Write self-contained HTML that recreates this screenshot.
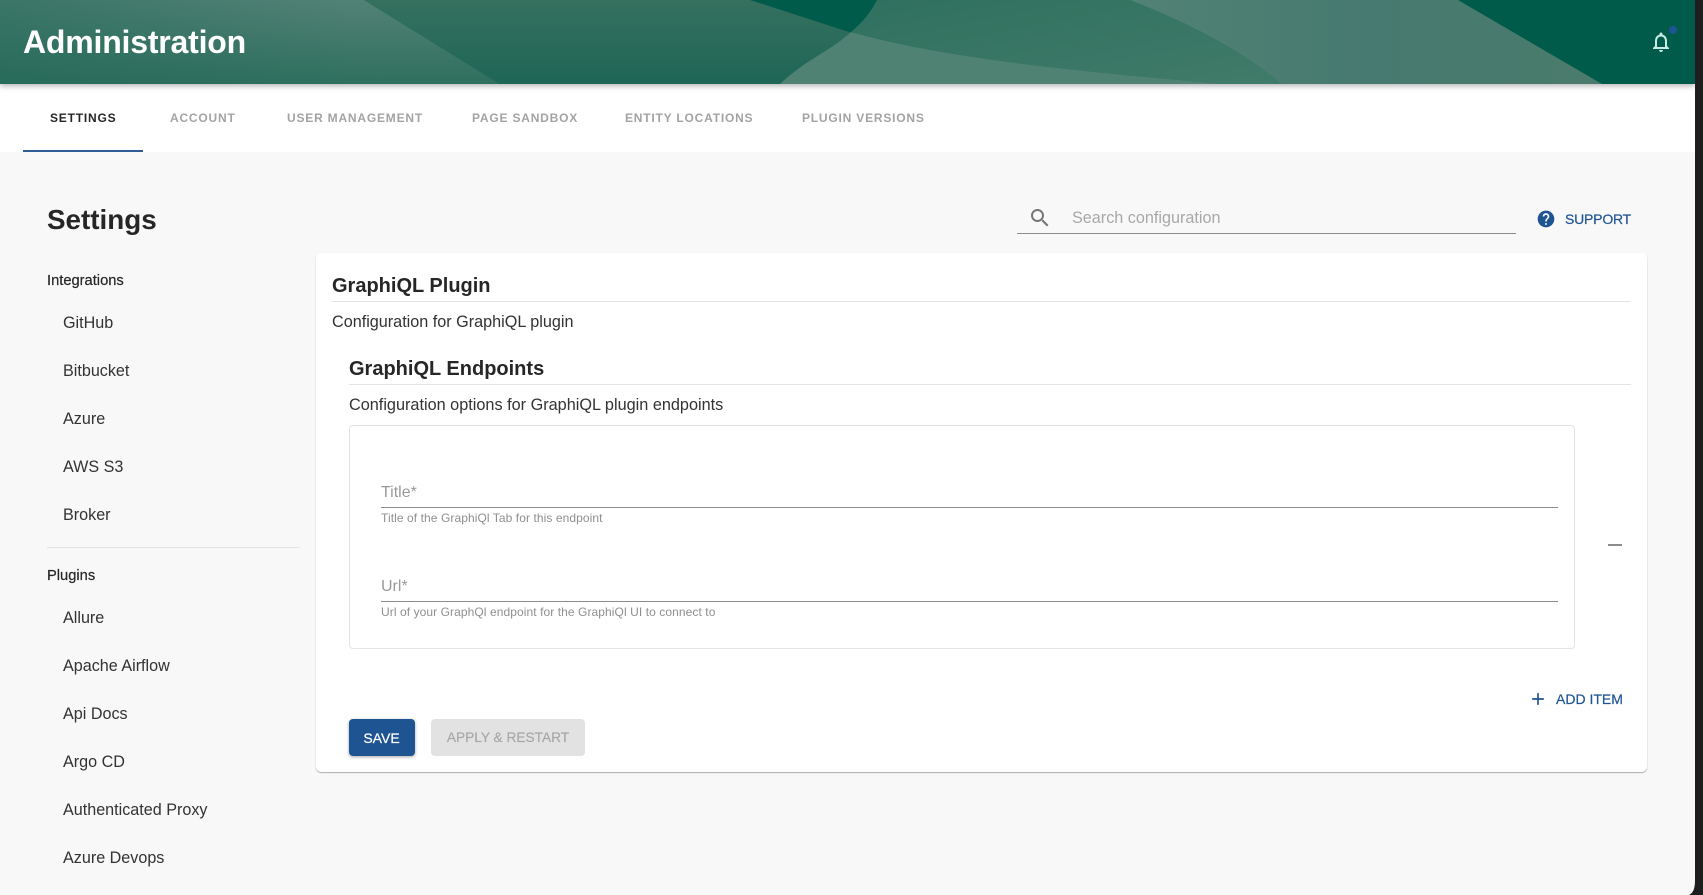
<!DOCTYPE html>
<html lang="en"><head><meta charset="utf-8"><title>Administration</title>
<style>
html,body{margin:0;padding:0;width:1703px;height:895px;overflow:hidden;background:#f8f8f8;font-family:"Liberation Sans",Arial,sans-serif;color:#262626}
.t{position:absolute;white-space:nowrap;line-height:20px;height:20px}
.tab{font-size:12px;font-weight:bold;letter-spacing:.8px;color:#a3a3a3;top:108px}
.nav{font-size:16.15px;left:63px;color:#333}
.grp{font-size:14.7px;left:47px;color:#262626;-webkit-text-stroke:.2px #262626}
.b{position:absolute;background:#8c8c8c;height:1px}
.d{position:absolute;background:#e3e3e3;height:1px}
.help{font-size:12px;color:#8f8f8f;left:381px;letter-spacing:.08px}
svg{position:absolute;display:block}
.blue{color:#1f5493;-webkit-text-stroke:.2px #1f5493;font-size:14px}
</style></head>
<body>
<div style="position:absolute;left:0;top:0;width:1695px;height:152px;background:#fff"></div>
<svg style="left:0;top:0;filter:drop-shadow(0 2px 3px rgba(0,0,0,.3))" width="1695" height="84" viewBox="0 0 1695 84">
<defs>
<linearGradient id="l" x1="0" y1="0" x2="0" y2="1"><stop offset="0" stop-color="#528276"/><stop offset="1" stop-color="#2f6f5e"/></linearGradient>
<linearGradient id="lx" x1="0" y1="0" x2="1" y2="0"><stop offset="0" stop-color="#1e6656" stop-opacity=".45"/><stop offset=".7" stop-color="#1e6656" stop-opacity="0"/></linearGradient>
<linearGradient id="m" x1="0" y1="0" x2="0" y2="1"><stop offset="0" stop-color="#36705f"/><stop offset="1" stop-color="#1e6656"/></linearGradient>
<linearGradient id="m2" x1="0" y1="0" x2="1" y2="1"><stop offset="0" stop-color="#30705f"/><stop offset="1" stop-color="#417b69"/></linearGradient>
<linearGradient id="r" x1="0" y1="0" x2="1" y2="0"><stop offset="0" stop-color="#518274"/><stop offset=".5" stop-color="#477a70"/><stop offset="1" stop-color="#4a7b6b"/></linearGradient>
</defs>
<rect width="1695" height="84" fill="#005b4b"/>
<path d="M0 0H364L500 84H0Z" fill="url(#l)"/>
<path d="M0 0H364L500 84H0Z" fill="url(#lx)"/>
<path d="M364 0H750L852 33C832 50 805 60 780 84H500Z" fill="url(#m)"/>
<path d="M877 0H1130C1180 20 1235 45 1281 84H1225C1090 72 950 60 851 32C862 23 871 12 877 0Z" fill="url(#m2)"/>
<path d="M851 32C950 60 1090 72 1225 84H780C805 60 832 50 851 32Z" fill="#4f8272"/>
<path d="M1130 0H1458L1602 84H1281C1235 45 1180 20 1130 0Z" fill="url(#r)"/>
</svg>
<div class="t" style="left:23px;top:22px;height:40px;line-height:40px;font-size:32px;font-weight:bold;color:#fff;letter-spacing:-.2px">Administration</div>
<svg style="left:1649px;top:30px" width="24" height="24" viewBox="0 0 24 24"><path fill="#c8ebe3" d="M12 22c1.1 0 2-.9 2-2h-4c0 1.1.9 2 2 2zm6-6v-5c0-3.07-1.63-5.64-4.5-6.32V4c0-.83-.67-1.5-1.5-1.5s-1.5.67-1.5 1.5v.68C7.64 5.36 6 7.92 6 11v5l-2 2v1h16v-1l-2-2zm-2 1H8v-6c0-2.48 1.51-4.5 4-4.5s4 2.02 4 4.5v6z"/></svg>
<div style="position:absolute;left:1669px;top:26px;width:8px;height:8px;border-radius:50%;background:#1f5493"></div>

<div class="t tab" style="left:50px;color:#262626">SETTINGS</div>
<div class="t tab" style="left:170px">ACCOUNT</div>
<div class="t tab" style="left:287px">USER MANAGEMENT</div>
<div class="t tab" style="left:472px">PAGE SANDBOX</div>
<div class="t tab" style="left:625px">ENTITY LOCATIONS</div>
<div class="t tab" style="left:802px">PLUGIN VERSIONS</div>
<div style="position:absolute;left:23px;top:150px;width:120px;height:2px;background:#2f5d96"></div>

<div class="t" style="left:47px;top:204px;height:32px;line-height:32px;font-size:27.8px;font-weight:bold">Settings</div>
<div class="t grp" style="top:271px">Integrations</div>
<div class="t nav" style="top:313px">GitHub</div>
<div class="t nav" style="top:361px">Bitbucket</div>
<div class="t nav" style="top:409px">Azure</div>
<div class="t nav" style="top:457px">AWS S3</div>
<div class="t nav" style="top:505px">Broker</div>
<div class="d" style="left:47px;top:547px;width:253px"></div>
<div class="t grp" style="top:566px">Plugins</div>
<div class="t nav" style="top:608px">Allure</div>
<div class="t nav" style="top:656px">Apache Airflow</div>
<div class="t nav" style="top:704px">Api Docs</div>
<div class="t nav" style="top:752px">Argo CD</div>
<div class="t nav" style="top:800px">Authenticated Proxy</div>
<div class="t nav" style="top:848px">Azure Devops</div>

<svg style="left:1028px;top:206px" width="24" height="24" viewBox="0 0 24 24"><path fill="#757575" d="M15.5 14h-.79l-.28-.27C15.41 12.59 16 11.11 16 9.5 16 5.91 13.09 3 9.5 3S3 5.91 3 9.5 5.91 16 9.5 16c1.61 0 3.09-.59 4.23-1.57l.27.28v.79l5 4.99L20.49 19l-4.99-5zm-6 0C7.01 14 5 11.99 5 9.5S7.01 5 9.5 5 14 7.01 14 9.5 11.99 14 9.5 14z"/></svg>
<div class="t" style="left:1072px;top:208px;font-size:16.2px;color:#a8a8a8">Search configuration</div>
<div class="b" style="left:1017px;top:233px;width:499px"></div>
<svg style="left:1536px;top:209px" width="20" height="20" viewBox="0 0 24 24"><path fill="#1f5493" d="M12 2C6.48 2 2 6.48 2 12s4.48 10 10 10 10-4.48 10-10S17.52 2 12 2zm1 17h-2v-2h2v2zm2.07-7.75l-.9.92C13.45 12.9 13 13.5 13 15h-2v-.5c0-1.1.45-2.1 1.17-2.83l1.24-1.26c.37-.36.59-.86.59-1.41 0-1.1-.9-2-2-2s-2 .9-2 2H8c0-2.21 1.79-4 4-4s4 1.79 4 4c0 .88-.36 1.68-.93 2.25z"/></svg>
<div class="t blue" style="left:1565px;top:209px;letter-spacing:-.2px">SUPPORT</div>

<div style="position:absolute;left:316px;top:253px;width:1331px;height:519px;background:#fff;border-radius:5px;box-shadow:0 1px 1px rgba(0,0,0,.3),0 0 2px rgba(0,0,0,.03)"></div>
<div class="t" style="left:332px;top:276px;font-size:20px;font-weight:bold">GraphiQL Plugin</div>
<div class="d" style="left:332px;top:301px;width:1299px"></div>
<div class="t" style="left:332px;top:312px;font-size:16.2px;color:#333">Configuration for GraphiQL plugin</div>
<div class="t" style="left:349px;top:359px;font-size:20px;font-weight:bold">GraphiQL Endpoints</div>
<div class="d" style="left:349px;top:384px;width:1282px"></div>
<div class="t" style="left:349px;top:395px;font-size:16.25px;color:#333">Configuration options for GraphiQL plugin endpoints</div>
<div style="position:absolute;left:348.5px;top:425px;width:1224px;height:222px;border:1px solid #e3e3e3;border-radius:4px"></div>
<div class="t" style="left:381px;top:483px;font-size:16px;color:#999">Title*</div>
<div class="b" style="left:381px;top:507px;width:1177px"></div>
<div class="t help" style="top:508px">Title of the GraphiQl Tab for this endpoint</div>
<div class="t" style="left:381px;top:577px;font-size:16px;color:#999">Url*</div>
<div class="b" style="left:381px;top:601px;width:1177px"></div>
<div class="t help" style="top:602px">Url of your GraphQl endpoint for the GraphiQl UI to connect to</div>
<div style="position:absolute;left:1608px;top:544px;width:14px;height:2px;background:#8c8c8c"></div>
<svg style="left:1528px;top:689px" width="20" height="20" viewBox="0 0 24 24"><path fill="#1f5493" d="M19 13h-6v6h-2v-6H5v-2h6V5h2v6h6v2z"/></svg>
<div class="t blue" style="left:1556px;top:689px">ADD ITEM</div>
<div class="t" style="left:348.5px;top:719px;width:66px;height:37px;line-height:38px;background:#1f5493;color:#fff;text-align:center;font-size:14px;border-radius:4px;box-shadow:0 1px 3px rgba(0,0,0,.35);-webkit-text-stroke:.2px #fff">SAVE</div>
<div class="t" style="left:431px;top:719px;width:154px;height:37px;line-height:38px;background:#e2e2e2;color:#a8a8a8;text-align:center;font-size:13.7px;border-radius:4px;-webkit-text-stroke:.2px #a8a8a8">APPLY &amp; RESTART</div>

<div style="position:absolute;left:1695px;top:0;width:8px;height:895px;background:#1e1e1e"></div>
<svg style="left:1688px;top:880px" width="15" height="15" viewBox="0 0 15 15"><path fill="#1e1e1e" d="M7 0C7 9 5 13 1 15H15V0Z"/></svg>
</body></html>
